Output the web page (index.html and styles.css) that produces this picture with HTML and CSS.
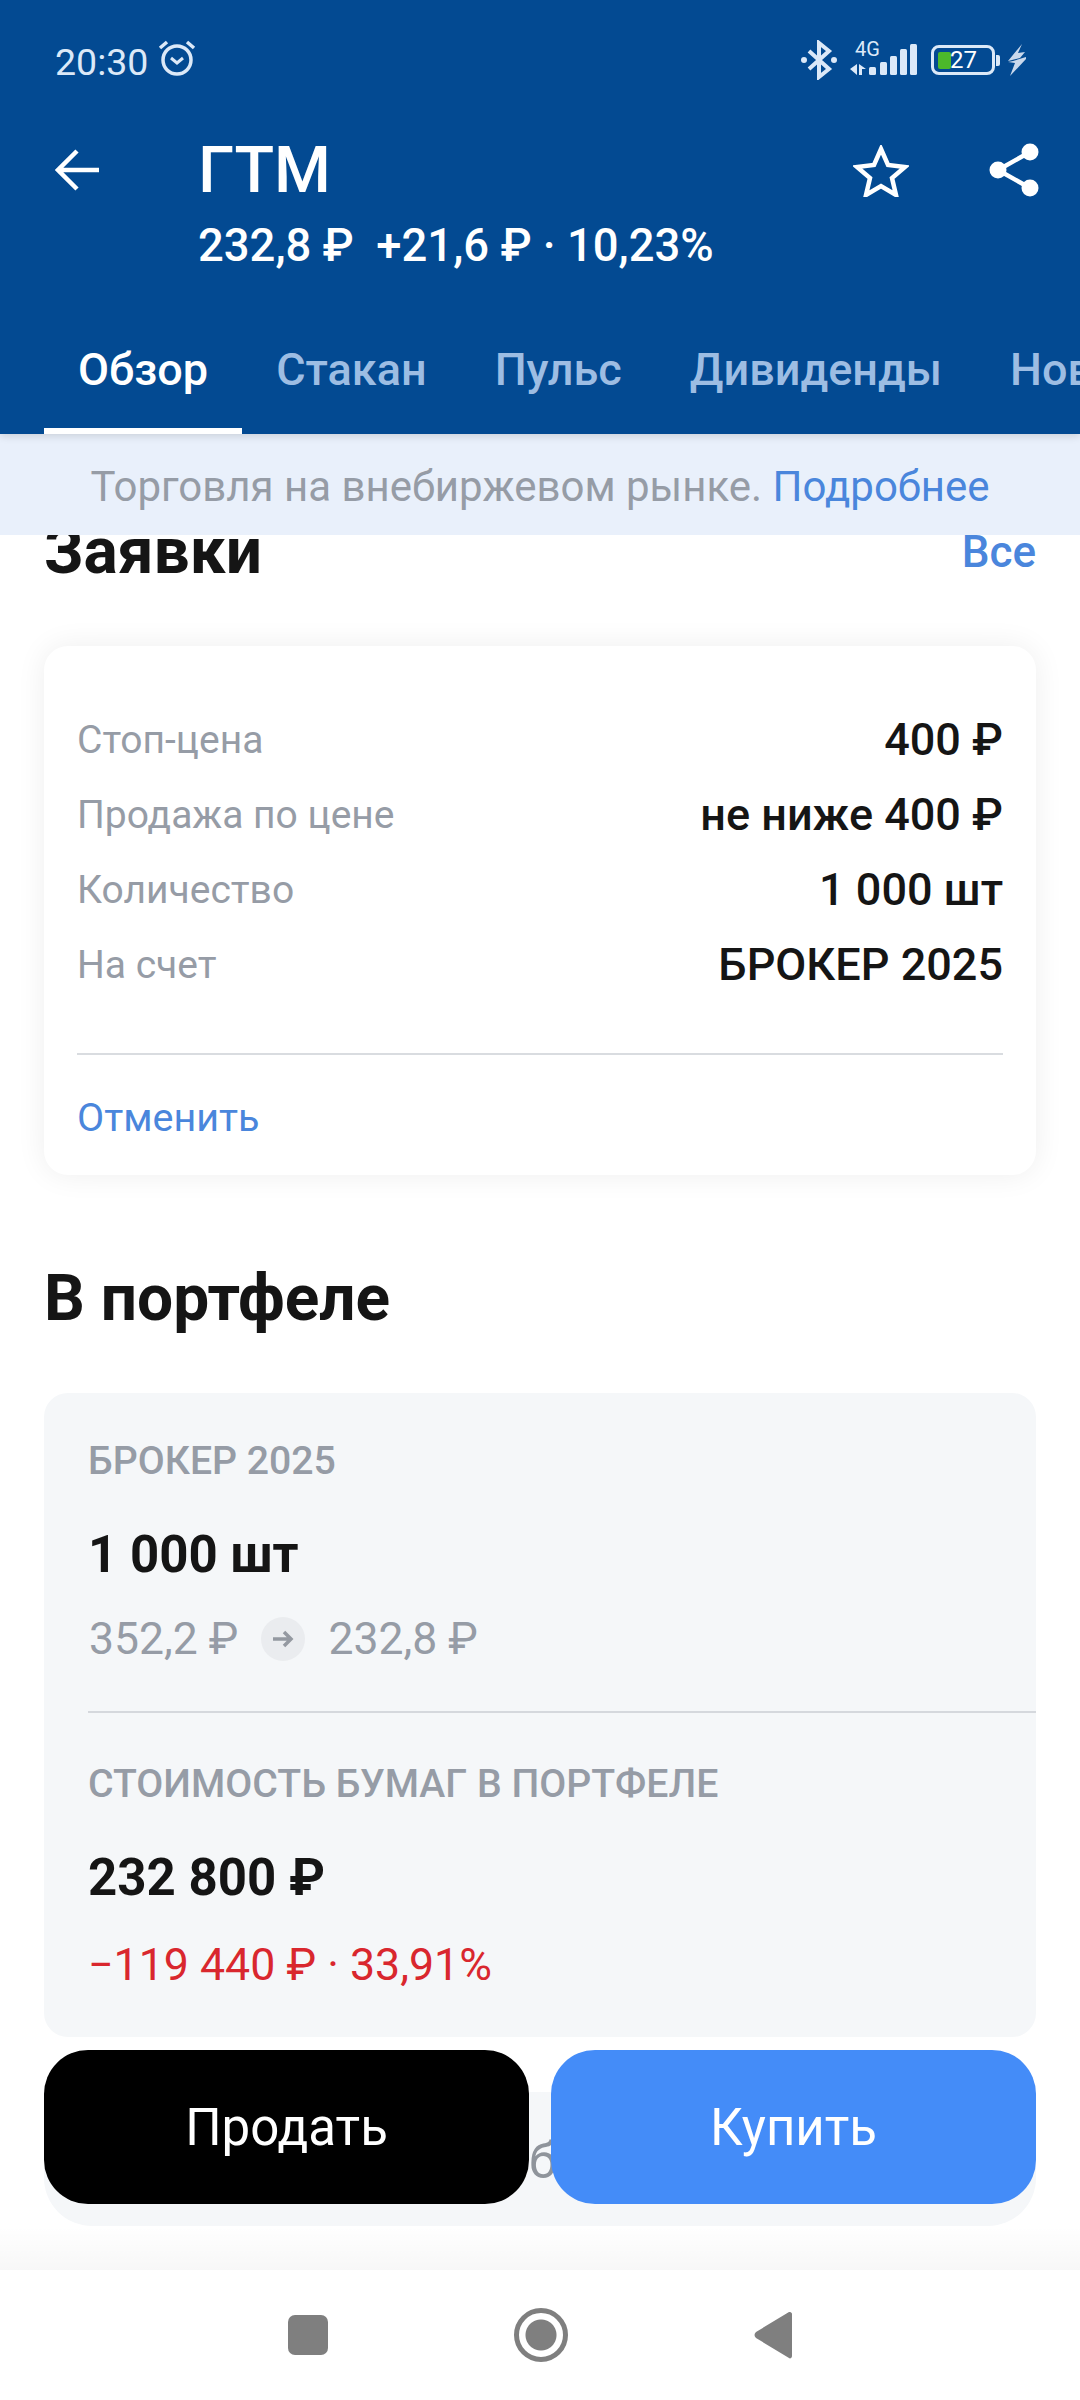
FILE: index.html
```html
<!DOCTYPE html>
<html lang="ru">
<head>
  <meta charset="UTF-8" />
  <meta name="viewport" content="width=device-width, initial-scale=1.0"/>
  <title>ГТМ</title>
  <link rel="stylesheet" href="styles.css">
</head>
<body>

  <header class="top">
    <div class="status">
      <div class="status-left">
        <span class="time">20:30</span>
        <svg class="alarm" viewBox="0 0 40 40" width="40" height="40" fill="none" stroke="#dce9f8">
          <circle cx="20" cy="22" r="14" stroke-width="3.5"/>
          <path d="M14 20l6 5 6-5" stroke-width="3"/>
          <path d="M3 10l7-6M37 10l-7-6" stroke-width="3.5"/>
        </svg>
      </div>
      <div class="status-right">
        <svg class="bt" viewBox="0 0 36 40" width="36" height="40" fill="none" stroke="#dce9f8" stroke-width="4">
          <path d="M8 11l20 18-10 8V3l10 8L8 29"/>
          <circle cx="3" cy="20" r="3" fill="#dce9f8" stroke="none"/>
          <circle cx="33" cy="20" r="3" fill="#dce9f8" stroke="none"/>
        </svg>
        <div class="signal">
          <span class="net">4G</span>
          <svg viewBox="0 0 68 32" width="68" height="32" fill="#dce9f8">
            <path d="M7 20v11l-7-6zM9 20l7 5h-4v6H9z"/>
            <rect x="19" y="23" width="7" height="8" rx="1.5"/>
            <rect x="30" y="18" width="7" height="13" rx="1.5"/>
            <rect x="40" y="12" width="7" height="19" rx="1.5"/>
            <rect x="50" y="5" width="7" height="26" rx="1.5"/>
            <rect x="60" y="0" width="7" height="31" rx="1.5"/>
          </svg>
        </div>
        <div class="battery">
          <span class="battery-level"></span>
          <span class="battery-num">27</span>
        </div>
        <span class="battery-tip"></span>
        <svg class="bolt" viewBox="0 0 20 32" width="20" height="32" fill="#c9d8ec">
          <path d="M15 0L1 17l12-3 5-6-7 1z"/>
          <path d="M19 13L6 17l-5 1 7 1-5 13 16-17z"/>
        </svg>
      </div>
    </div>

    <div class="title-row">
      <svg class="back" viewBox="0 0 44 44" width="44" height="44" fill="none" stroke="#fff" stroke-width="4.5">
        <path d="M44 22H3M22 3L3 22l19 19"/>
      </svg>
      <div class="title-text">
        <h1>ГТМ</h1>
        <p>232,8 ₽&nbsp; +21,6 ₽ · 10,23%</p>
      </div>
      <svg class="star" viewBox="0 0 56 52" width="56" height="52" fill="none" stroke="#fff" stroke-width="4.5">
        <path d="M28 4l7 16 17 2-13 11 4 17-15-9-15 9 4-17L4 22l17-2z"/>
      </svg>
      <svg class="share" viewBox="0 0 52 56" width="52" height="56" fill="#fff">
        <circle cx="42" cy="10" r="8.5"/>
        <circle cx="10" cy="28" r="8.5"/>
        <circle cx="42" cy="46" r="8.5"/>
        <path d="M42 10L10 28l32 18" fill="none" stroke="#fff" stroke-width="4.5"/>
      </svg>
    </div>

    <nav class="tabs">
      <a class="tab active">Обзор</a>
      <a class="tab">Стакан</a>
      <a class="tab">Пульс</a>
      <a class="tab">Дивиденды</a>
      <a class="tab">Новости</a>
    </nav>
  </header>

  <div class="notice">Торговля на внебиржевом рынке. <a>Подробнее</a></div>

  <main class="content">
    <div class="section-head orders-head">
      <h2>Заявки</h2>
      <a class="link">Все</a>
    </div>

    <section class="order-card">
      <div class="row"><span>Стоп-цена</span><b>400 ₽</b></div>
      <div class="row"><span>Продажа по цене</span><b>не ниже 400 ₽</b></div>
      <div class="row"><span>Количество</span><b>1 000 шт</b></div>
      <div class="row"><span>На счет</span><b>БРОКЕР 2025</b></div>
      <a class="cancel">Отменить</a>
    </section>

    <h2 class="portfolio-title">В портфеле</h2>

    <section class="grey-card holdings">
      <div class="block">
        <div class="caption">БРОКЕР 2025</div>
        <div class="amount">1 000 шт</div>
        <div class="prices">
          <span>352,2 ₽</span>
          <span class="arrow">
            <svg viewBox="0 0 22 20" width="22" height="20" fill="none" stroke="#9499a1" stroke-width="3.5">
              <path d="M1 10h18M12 3l7 7-7 7"/>
            </svg>
          </span>
          <span>232,8 ₽</span>
        </div>
      </div>
      <div class="block block-second">
        <div class="caption">СТОИМОСТЬ БУМАГ В ПОРТФЕЛЕ</div>
        <div class="amount">232 800 ₽</div>
        <div class="loss">−119 440 ₽ · 33,91%</div>
      </div>
    </section>

    <section class="grey-card more-card">
      <div class="more-text">Подробнее</div>
    </section>

    <div class="actions">
      <button class="btn sell">Продать</button>
      <button class="btn buy">Купить</button>
    </div>
  </main>

  <footer class="navbar">
    <span class="nav-square"></span>
    <span class="nav-circle"></span>
    <svg viewBox="0 0 38 48" width="38" height="48" fill="#7f7f7f">
      <path d="M36 1c1 0 2 1 2 2v42c0 2-2 3-3 2L2 27c-2-2-2-4 0-6L35 1z"/>
    </svg>
  </footer>

</body>
</html>
```

FILE: styles.css
```css
* {
  box-sizing: border-box;
}
html, body {
  margin: 0;
  padding: 0;
}
body {
  width: 1080px;
  height: 2400px;
  overflow: hidden;
  display: flex;
  flex-direction: column;
  background: #fff;
  font-family: Roboto, sans-serif;
  color: #151515;
}
h1, h2, p {
  margin: 0;
}

/* header */
.top {
  position: relative;
  z-index: 2;
  height: 434px;
  flex-shrink: 0;
  background: #034a92;
  color: #fff;
  box-shadow: 0 2px 8px rgba(0, 0, 0, 0.14);
}
.status {
  display: flex;
  justify-content: space-between;
  align-items: center;
  height: 60px;
  margin-top: 30px;
  padding: 0 53px 0 55px;
}
.status-left, .status-right {
  display: flex;
  align-items: center;
}
.time {
  margin-top: 4px;
  font-size: 37.5px;
  color: #dce9f8;
}
.alarm {
  margin-left: 9px;
  margin-top: -4px;
}
.status-right .bt {
  margin-right: 13px;
}
.signal {
  position: relative;
  width: 68px;
  height: 32px;
  margin-right: 13px;
}
.signal svg {
  display: block;
}
.net {
  position: absolute;
  left: 5px;
  top: -7px;
  font-size: 20px;
  color: #dce9f8;
}
.battery {
  position: relative;
  width: 64px;
  height: 30px;
  border: 3px solid #dce9f8;
  border-radius: 8px;
}
.battery-level {
  position: absolute;
  left: 4px;
  top: 4px;
  bottom: 3px;
  width: 13px;
  border-radius: 2px;
  background: #4cb82b;
}
.battery-num {
  position: absolute;
  left: 16px;
  top: -3px;
  font-size: 24px;
  line-height: 30px;
  color: #fff;
}
.battery-tip {
  width: 4px;
  height: 11px;
  margin: 0 7px 0 1px;
  border-radius: 0 2px 2px 0;
  background: #dce9f8;
}

.title-row {
  display: flex;
  align-items: flex-start;
  height: 140px;
  margin-top: 42px;
  padding-left: 55px;
}
.back {
  margin-top: 16px;
}
.title-text {
  width: 655px;
  margin-left: 99px;
}
.title-text h1 {
  font-size: 65px;
  font-weight: 500;
  line-height: 76px;
}
.title-text p {
  font-size: 45.4px;
  font-weight: 500;
  line-height: 52px;
  margin-top: 12px;
  white-space: nowrap;
}
.star {
  margin-top: 13px;
}
.share {
  margin-left: 79px;
  margin-top: 10px;
}

.tabs {
  display: flex;
  margin-top: 56px;
  padding-left: 44px;
  white-space: nowrap;
  overflow: hidden;
}
.tab {
  height: 106px;
  padding: 16px 34px 0;
  font-size: 45px;
  font-weight: 500;
  line-height: 52px;
  color: #9dbde3;
}
.tab.active {
  color: #fff;
  border-bottom: 6px solid #fff;
}

/* banner */
.notice {
  position: relative;
  z-index: 1;
  height: 101px;
  flex-shrink: 0;
  display: flex;
  align-items: center;
  justify-content: center;
  padding-top: 3px;
  background: #e9f0fb;
  color: #969ca6;
  font-size: 42px;
  white-space: pre;
}
.notice a, .link, .cancel {
  color: #4a86dc;
}

/* content */
.content {
  position: relative;
  flex: 1;
  overflow: hidden;
  padding: 0 44px;
}
.section-head {
  display: flex;
  justify-content: space-between;
  align-items: center;
}
.orders-head {
  margin-top: -18px;
  height: 70px;
}
h2 {
  font-size: 64px;
  font-weight: 700;
  line-height: 70px;
}
.link {
  font-size: 44px;
  font-weight: 500;
}

.order-card {
  margin-top: 59px;
  height: 529px;
  padding: 56px 33px 0;
  background: #fff;
  border-radius: 24px;
  box-shadow: 0 0 30px rgba(0, 0, 0, 0.07);
}
.row {
  display: flex;
  justify-content: space-between;
  align-items: center;
  height: 75px;
  font-size: 39px;
  color: #969ca6;
}
.row b {
  font-size: 45px;
  font-weight: 500;
  color: #151515;
}
.cancel {
  display: block;
  margin-top: 51px;
  padding-top: 39px;
  border-top: 2px solid #d9dce0;
  font-size: 39.5px;
}

.portfolio-title {
  margin-top: 89px;
}

.grey-card {
  background: #f5f7f9;
  border-radius: 24px;
}
.holdings {
  margin-top: 59px;
  height: 644px;
  padding-left: 44px;
}
.block {
  padding-top: 44px;
}
.block:first-child {
  height: 318px;
}
.block-second {
  padding-top: 47px;
  border-top: 2px solid #d5d8dd;
}
.caption {
  font-size: 39.2px;
  font-weight: 500;
  color: #969ca6;
  line-height: 48px;
}
.amount {
  margin-top: 40px;
  font-size: 51px;
  font-weight: 700;
  line-height: 60px;
}
.prices {
  display: flex;
  align-items: center;
  gap: 23px;
  margin-top: 28px;
  padding-left: 1px;
  font-size: 44.5px;
  line-height: 52px;
  color: #969ca6;
}
.arrow {
  display: flex;
  align-items: center;
  justify-content: center;
  width: 44px;
  height: 44px;
  border-radius: 50%;
  background: #eaecef;
}
.loss {
  margin-top: 32px;
  font-size: 44.7px;
  line-height: 50px;
  color: #d9272e;
}

.more-card {
  height: 134px;
  margin-top: 55px;
  padding: 39px 62px 0 0;
  border-radius: 0 0 48px 48px;
  text-align: center;
}
.more-text {
  font-size: 50px;
  line-height: 60px;
  color: #8f949b;
}

/* buttons lie over the scrolled list */
.actions {
  position: absolute;
  left: 0;
  right: 0;
  bottom: 0;
  display: flex;
  gap: 22px;
  height: 220px;
  padding: 0 44px 66px;
  align-items: flex-end;
  background: linear-gradient(to bottom, rgba(0, 0, 0, 0) 176px, rgba(0, 0, 0, 0.03) 220px);
}
.btn {
  flex: 1;
  height: 154px;
  border: none;
  border-radius: 44px;
  font-family: Roboto, sans-serif;
  font-size: 51px;
  color: #fff;
}
.sell {
  background: #000;
}
.buy {
  background: #448cf8;
}

/* android nav */
.navbar {
  height: 130px;
  flex-shrink: 0;
  display: flex;
  align-items: center;
  justify-content: center;
  gap: 186px;
  background: #fff;
}
.nav-square {
  width: 40px;
  height: 40px;
  border-radius: 7px;
  background: #7f7f7f;
}
.nav-circle {
  width: 54px;
  height: 54px;
  border-radius: 50%;
  border: 5px solid #7f7f7f;
  background: radial-gradient(circle, #7f7f7f 15px, transparent 16px);
}
```
